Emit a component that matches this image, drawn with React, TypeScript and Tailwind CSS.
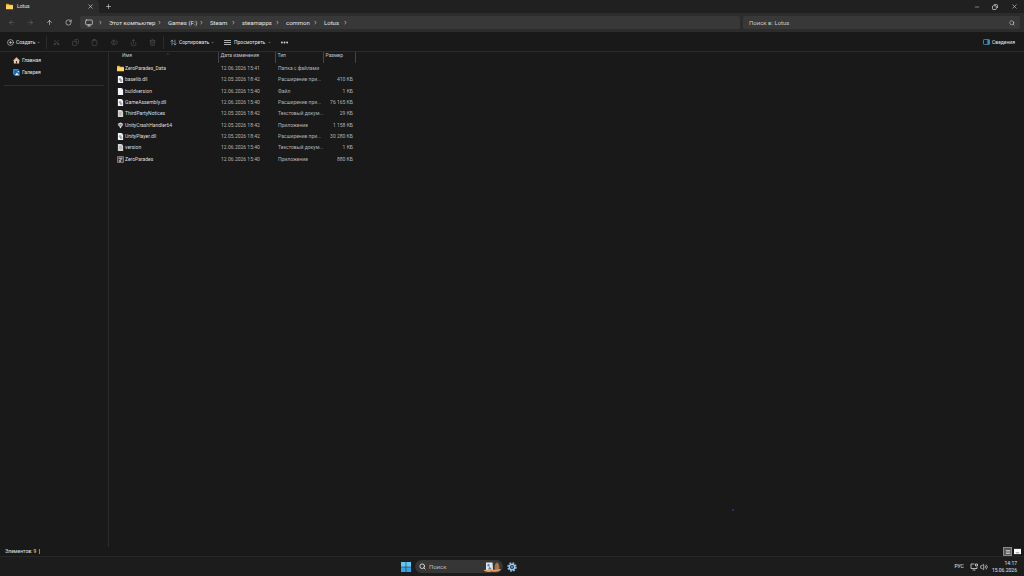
import type { ReactNode } from "react";
import {
  LuArrowLeft,
  LuArrowRight,
  LuArrowUp,
  LuRotateCw,
  LuMonitor,
  LuSearch,
  LuScissors,
  LuCopy,
  LuClipboard,
  LuTextCursorInput,
  LuShare,
  LuTrash2,
  LuArrowDownUp,
  LuCirclePlus,
  LuMinus,
  LuPlus,
  LuX,
  LuEllipsis,
  LuChevronRight,
  LuChevronDown,
  LuChevronUp,
  LuVolume2,
} from "react-icons/lu";

type Kind = "folder" | "dll" | "file" | "text" | "unity" | "game";

const files: { name: string; date: string; type: string; size: string; kind: Kind }[] = [
  { name: "ZeroParades_Data", date: "12.06.2026 15:41", type: "Папка с файлами", size: "", kind: "folder" },
  { name: "baselib.dll", date: "12.05.2026 18:42", type: "Расширение при...", size: "410 КБ", kind: "dll" },
  { name: "buildversion", date: "12.06.2026 15:40", type: "Файл", size: "1 КБ", kind: "file" },
  { name: "GameAssembly.dll", date: "12.06.2026 15:40", type: "Расширение при...", size: "76 165 КБ", kind: "dll" },
  { name: "ThirdPartyNotices", date: "12.05.2026 18:42", type: "Текстовый докум...", size: "29 КБ", kind: "text" },
  { name: "UnityCrashHandler64", date: "12.05.2026 18:42", type: "Приложение", size: "1 158 КБ", kind: "unity" },
  { name: "UnityPlayer.dll", date: "12.05.2026 18:42", type: "Расширение при...", size: "30 280 КБ", kind: "dll" },
  { name: "version", date: "12.06.2026 15:40", type: "Текстовый докум...", size: "1 КБ", kind: "text" },
  { name: "ZeroParades", date: "12.06.2026 15:40", type: "Приложение", size: "880 КБ", kind: "game" },
];

const path = [
  { name: "Этот компьютер", width: "w-[43px]" },
  { name: "Games (F:)", width: "w-[26px]" },
  { name: "Steam", width: "w-4" },
  { name: "steamapps", width: "w-7" },
  { name: "common", width: "w-[22px]" },
  { name: "Lotus", width: "w-[14px]" },
];

function FileIcon({ kind }: { kind: Kind }) {
  if (kind === "folder") {
    return (
      <svg viewBox="0 0 16 16" className="size-[7px] shrink-0">
        <path d="M0 3a1.5 1.5 0 0 1 1.500-1.500h4L8 4h6.500A1.500 1.500 0 0 1 16 5.500V13H0z" fill="#e5a823" />
        <rect y="5" width="16" height="9.500" rx="1.500" fill="#ffd65c" />
      </svg>
    );
  }
  if (kind === "unity") {
    return (
      <svg viewBox="0 0 16 16" className="size-[7px] shrink-0">
        <path d="M2 3l5 2v5L2 8zM14 3L9 5v5l5-2z" fill="#a4a4a4" />
        <path d="M8 1l5 2.500L8 6 3 3.500zM5 8h6l-1 4-2 3-2-3z" fill="#d6d6d6" />
      </svg>
    );
  }
  if (kind === "game") {
    return (
      <svg viewBox="0 0 16 16" className="size-[7px] shrink-0">
        <rect x="1" y="1" width="14" height="14" rx="1" fill="#46393f" stroke="#a9a1a4" strokeWidth="1.500" />
        <path d="M4 5h8M5 12l6-6M5 12h4" stroke="#e3dadd" strokeWidth="2" fill="none" />
      </svg>
    );
  }
  return (
    <svg viewBox="0 0 16 16" className="size-[7px] shrink-0">
      <path d="M2 0h8.500L14 3.500V16H2z" fill={kind === "text" ? "#d4d4d4" : "#f5f5f5"} />
      <path d="M10.500 0L14 3.500h-3.500z" fill="#9a9a9a" />
      {kind === "dll" && (
        <g fill="none" stroke="#5c6f80" strokeWidth="1.500">
          <circle cx="7" cy="7.500" r="1.800" />
          <circle cx="9.500" cy="11" r="1.800" />
        </g>
      )}
      {kind === "text" && <path d="M5 6h6M5 8.500h6M5 11h6" stroke="#8b8b8b" />}
    </svg>
  );
}

function IconButton({ label, className, children }: { label: string; className?: string; children: ReactNode }) {
  return (
    <button aria-label={label} className={`flex items-center justify-center shrink-0 ${className ?? ""}`}>
      {children}
    </button>
  );
}

function TitleBar() {
  return (
    <header className="flex h-[13px] bg-[#202020]">
      <div className="flex w-[99px] items-center rounded-tr-sm bg-[#2c2c2c] pr-[5px] pl-1.5">
        <FileIcon kind="folder" />
        <span className="flex-1 pl-1">Lotus</span>
        <IconButton label="Закрыть вкладку">
          <LuX className="size-[7px]" />
        </IconButton>
      </div>
      <IconButton label="Новая вкладка" className="w-[18px]">
        <LuPlus className="size-[7px]" />
      </IconButton>
      <div className="ml-auto flex text-[#d8d8d8]">
        <IconButton label="Свернуть" className="w-[18px]">
          <LuMinus className="size-[6px]" />
        </IconButton>
        <IconButton label="Восстановить" className="w-[18px]">
          <svg viewBox="0 0 12 12" className="size-[6px]" fill="none" stroke="currentColor" strokeWidth="1.500">
            <rect x="1" y="3.500" width="7.500" height="7.500" rx="1.500" />
            <path d="M4 1.200h5a2 2 0 0 1 2 2V8" />
          </svg>
        </IconButton>
        <IconButton label="Закрыть" className="w-[20px]">
          <LuX className="size-[7px]" />
        </IconButton>
      </div>
    </header>
  );
}

function AddressBar() {
  return (
    <nav className="flex h-[19px] items-center bg-[#2c2c2c] pr-1 pl-[2px] text-[6px]">
      <div className="flex w-[78px]">
        <IconButton label="Назад" className="w-[19px] text-[#686868]">
          <LuArrowLeft className="size-[7px]" />
        </IconButton>
        <IconButton label="Вперед" className="w-[19px] text-[#686868]">
          <LuArrowRight className="size-[7px]" />
        </IconButton>
        <IconButton label="Вверх" className="w-[19px]">
          <LuArrowUp className="size-[7px]" />
        </IconButton>
        <IconButton label="Обновить" className="w-[19px]">
          <LuRotateCw className="size-[7px]" />
        </IconButton>
      </div>
      <div className="flex h-[13px] flex-1 items-center rounded-xs bg-[#383838] pl-[5px]">
        <LuMonitor className="mr-[5px] size-2" />
        <LuChevronRight className="size-[5px]" strokeWidth={3} />
        {path.map((item) => (
          <div key={item.name} className="flex items-center">
            <a href="#" className={`ml-[6px] whitespace-nowrap ${item.width}`}>
              {item.name}
            </a>
            <LuChevronRight className="ml-[5px] size-[5px]" strokeWidth={3} />
          </div>
        ))}
      </div>
      <div className="ml-[3px] flex h-[13px] w-[277px] items-center rounded-xs bg-[#383838] pr-[5px] pl-[6px]">
        <input
          type="text"
          aria-label="Поиск в: Lotus"
          placeholder="Поиск в: Lotus"
          className="min-w-0 flex-1 bg-transparent outline-none placeholder:text-[#c8c8c8]"
        />
        <LuSearch className="size-[6px]" />
      </div>
    </nav>
  );
}

function Toolbar() {
  return (
    <div className="flex h-5 items-center border-b border-[#2b2b2b] bg-[#191919] pt-px pr-[9px] pl-[7px]">
      <button className="flex w-[33px] items-center gap-[2px] whitespace-nowrap">
        <LuCirclePlus className="size-[7px] shrink-0" />
        <span className="flex-1 text-left">Создать</span>
        <LuChevronDown className="size-[3px] shrink-0" strokeWidth={3} />
      </button>
      <div className="ml-[6px] h-[13px] w-px bg-[#2b2b2b]" />
      <div className="flex text-[#555]">
        <IconButton label="Вырезать" className="w-[19px]">
          <LuScissors className="size-[7px] -rotate-90" />
        </IconButton>
        <IconButton label="Копировать" className="w-[19px]">
          <LuCopy className="size-[7px] -scale-x-100" />
        </IconButton>
        <IconButton label="Вставить" className="w-[19px]">
          <LuClipboard className="size-[7px]" />
        </IconButton>
        <IconButton label="Переименовать" className="w-[20px]">
          <LuTextCursorInput className="size-[7px]" />
        </IconButton>
        <IconButton label="Поделиться" className="w-[19px]">
          <LuShare className="size-[7px]" />
        </IconButton>
        <IconButton label="Удалить" className="w-[19px]">
          <LuTrash2 className="size-[7px]" />
        </IconButton>
      </div>
      <div className="ml-px h-[13px] w-px bg-[#2b2b2b]" />
      <button className="ml-[6px] flex w-[43px] items-center gap-[2px] whitespace-nowrap">
        <LuArrowDownUp className="size-[7px] shrink-0 -scale-x-100 text-[#b5d2e6]" />
        <span className="flex-1 text-left">Сортировать</span>
        <LuChevronDown className="size-[3px] shrink-0" strokeWidth={3} />
      </button>
      <button className="ml-[11px] flex w-11 items-center gap-[3px] whitespace-nowrap">
        <svg viewBox="0 0 14 14" className="size-[7px] shrink-0" stroke="currentColor" strokeWidth="1.500">
          <path d="M0 3h14M0 7h14M0 11h14" />
        </svg>
        <span className="flex-1 text-left">Просмотреть</span>
        <LuChevronDown className="size-[3px] shrink-0" strokeWidth={3} />
      </button>
      <IconButton label="Дополнительно" className="ml-3">
        <LuEllipsis className="size-[9px]" strokeWidth={3} />
      </IconButton>
      <button className="ml-auto flex items-center gap-[2px]">
        <svg viewBox="0 0 16 14" className="h-[6px] w-[7px]">
          <rect x="1" y="1" width="14" height="12" rx="2" fill="none" stroke="#5fb2e8" strokeWidth="1.500" />
          <path d="M10 1h3a2 2 0 0 1 2 2v8a2 2 0 0 1-2 2h-3z" fill="#2f8fd3" />
        </svg>
        Сведения
      </button>
    </div>
  );
}

function Sidebar() {
  return (
    <aside className="w-[109px] shrink-0 border-r border-[#2b2b2b] px-1 pt-[2px]">
      <div className="border-b border-[#2f2f2f] pb-[6px] pl-[9px]">
        <a href="#" className="flex h-3 items-center gap-[2px]">
          <svg viewBox="0 0 16 16" className="size-[7px]">
            <path d="M2 7l6-6 6 6v8H2z" fill="#e9d3c3" />
            <path d="M0 8l8-8 8 8-1.500 1.500L8 3 1.500 9.500z" fill="#db8158" />
            <rect x="6.500" y="9" width="3" height="6" fill="#4a332a" />
          </svg>
          Главная
        </a>
        <a href="#" className="flex h-[13px] items-center gap-[2px]">
          <svg viewBox="0 0 16 16" className="size-[7px]">
            <rect width="13" height="13" rx="2" fill="#2b8fd8" />
            <rect x="3" y="3" width="13" height="13" rx="2" fill="#1467ab" />
            <path d="M4 14l5-6 5 6z" fill="#d7efff" />
            <circle cx="12" cy="6" r="1.500" fill="#fff" />
          </svg>
          Галерея
        </a>
      </div>
    </aside>
  );
}

function FileTable() {
  return (
    <table className="h-[113px] w-[246px] table-fixed text-left whitespace-nowrap">
      <colgroup>
        <col className="w-[109px]" />
        <col className="w-[57px]" />
        <col className="w-12" />
        <col className="w-8" />
      </colgroup>
      <thead className="align-top text-[#c4c4c4]">
        <tr className="h-[11px]">
          <th className="border-r border-[#444] pl-[13px] font-normal">
            <div className="flex items-center">
              <span className="w-[44px]">Имя</span>
              <LuChevronUp className="size-1 self-start text-[#999]" />
            </div>
          </th>
          <th className="border-r border-[#444] pl-[2px] font-normal">Дата изменения</th>
          <th className="border-r border-[#444] pl-[2px] font-normal">Тип</th>
          <th className="border-r border-[#444] pl-[2px] font-normal">Размер</th>
        </tr>
      </thead>
      <tbody>
        {files.map((file) => (
          <tr key={file.name} className="text-[#b4b4b4]">
            <td className="pl-2 text-[#dedede]">
              <div className="flex items-center gap-px">
                <FileIcon kind={file.kind} />
                {file.name}
              </div>
            </td>
            <td className="pl-[3px]">{file.date}</td>
            <td className="pl-[3px]">{file.type}</td>
            <td className="pr-[2px] text-right">{file.size}</td>
          </tr>
        ))}
      </tbody>
    </table>
  );
}

function Taskbar() {
  return (
    <footer className="flex h-[19px] items-center bg-[#1c1c1c] px-[7px]">
      <div className="w-[39%]" />
      <div className="flex shrink-0 items-center">
        <IconButton label="Пуск">
          <svg viewBox="0 0 20 20" className="size-[10px]">
            <path d="M0 0h9.500v9.500H0zM10.500 0H20v9.500h-9.500z" fill="#5cc8f5" />
            <path d="M0 10.500h9.500V20H0zM10.500 10.500H20V20h-9.500z" fill="#2fa4e7" />
          </svg>
        </IconButton>
        <div className="ml-1 flex h-[13px] w-[88px] items-center rounded-full bg-[#363636] pr-px pl-1">
          <LuSearch className="size-[7px] shrink-0" strokeWidth={3} />
          <input
            type="text"
            aria-label="Поиск"
            placeholder="Поиск"
            className="ml-[3px] min-w-0 flex-1 bg-transparent text-[6px] outline-none placeholder:text-[#b8b8b8]"
          />
          <svg viewBox="0 0 38 24" className="h-3 w-[19px] shrink-0">
            <path d="M6 3h13l1 15H6z" fill="#dfe7ec" />
            <path d="M9 6h4v5H9zM13 11l5 6h-8z" fill="#5a86ad" />
            <path d="M24 18c-2-7 0-14 4-15 4 1 6 9 4 15z" fill="#b66a35" />
            <path d="M27 6h3v11h-3z" fill="#6e8999" />
            <path d="M1 18c9-2 23 1 35-2-2 6-11 6-18 5C11 23 4 22 1 18z" fill="#eba05a" />
          </svg>
        </div>
        <IconButton label="Параметры" className="ml-1">
          <svg viewBox="0 0 20 20" className="size-[10px]">
            <circle cx="10" cy="10" r="7.500" fill="none" stroke="#86b2d5" strokeWidth="4" strokeDasharray="3.500 2.390" />
            <circle cx="10" cy="10" r="5.500" fill="#24435c" stroke="#a8cdeb" strokeWidth="2.500" />
            <circle cx="10" cy="10" r="2" fill="#4ba3e3" />
          </svg>
        </IconButton>
      </div>
      <div className="flex flex-1 items-center justify-end">
        <span>РУС</span>
        <svg viewBox="0 0 16 16" className="ml-[6px] size-2" fill="none" stroke="currentColor" strokeWidth="1.500">
          <path d="M9 2H2v9h12V8M5 14h6M11 2h4v4h-4z" />
        </svg>
        <LuVolume2 className="ml-[2px] size-2" />
        <div className="ml-[4px] text-right leading-[7px]">
          <div>14:17</div>
          <div>15.06.2026</div>
        </div>
      </div>
    </footer>
  );
}

export default function App() {
  return (
    <div className="relative flex min-h-screen flex-col bg-[#191919] font-[Roboto,sans-serif] text-[5px] leading-[7px] text-[#e4e4e4]">
      <TitleBar />
      <AddressBar />
      <Toolbar />
      <main className="flex flex-1 items-stretch">
        <Sidebar />
        <FileTable />
      </main>
      <div className="flex h-[10px] items-center border-b border-[#272727] pr-[2px] pl-[5px]">
        <span>Элементов: 9</span>
        <div className="ml-[3px] h-[5px] w-px bg-[#888]" />
        <div className="ml-auto flex items-center gap-px">
          <IconButton label="Таблица" className="size-[9px] border border-[#8a8a8a] bg-[#555]">
            <svg viewBox="0 0 8 8" className="size-[6px]" stroke="#ddd">
              <path d="M1 2h6M1 4h6M1 6h6" />
            </svg>
          </IconButton>
          <IconButton label="Крупные значки" className="size-[9px]">
            <svg viewBox="0 0 8 8" className="size-[7px]">
              <rect y="1" width="8" height="6" fill="#fff" />
              <path d="M2 5.500h4" stroke="#777" />
            </svg>
          </IconButton>
        </div>
      </div>
      <Taskbar />
      <div className="absolute top-[88.400%] left-[71.500%] size-[2px] rounded-full bg-[#34347c]" />
    </div>
  );
}
